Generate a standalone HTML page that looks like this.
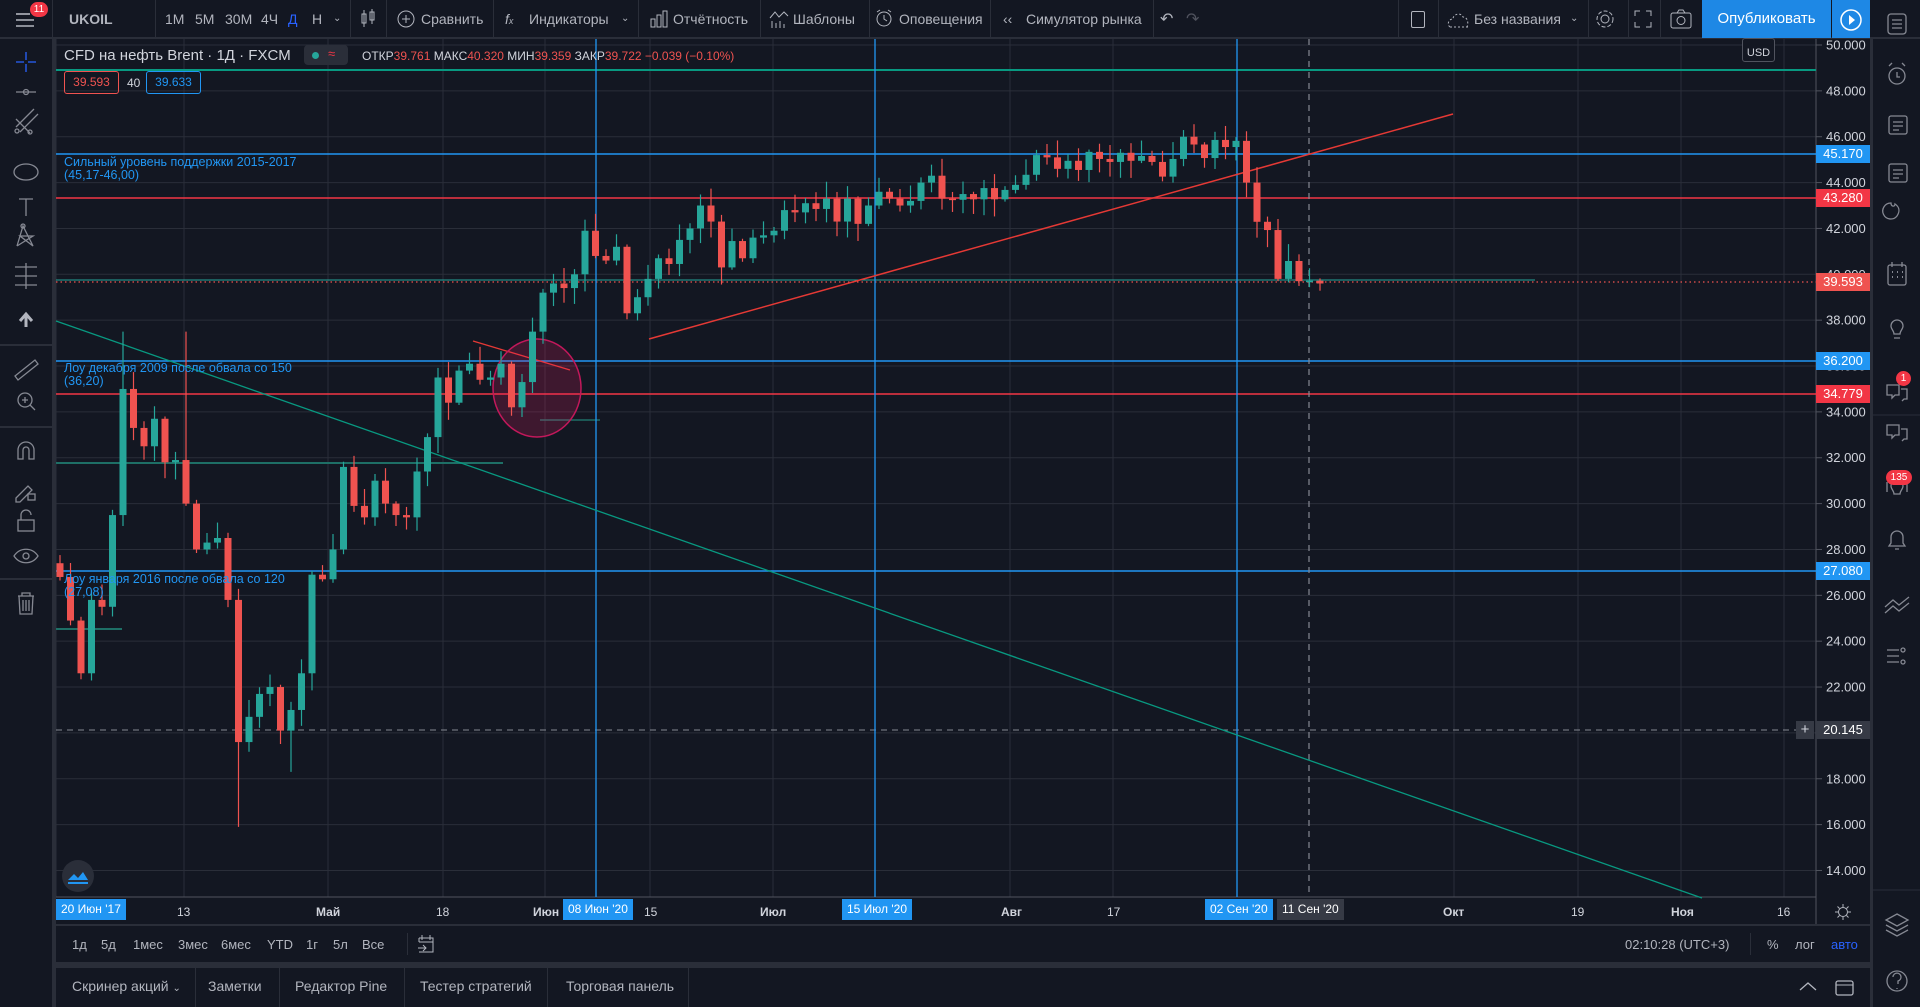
<!DOCTYPE html>
<html><head><meta charset="utf-8">
<style>
*{margin:0;padding:0;box-sizing:border-box}
body{width:1920px;height:1007px;overflow:hidden;background:#2a2e39;font-family:"Liberation Sans",sans-serif;color:#b2b5be;position:relative}
.a{position:absolute}
.tb{left:0;top:0;width:1920px;height:38px;background:#131722;border-bottom:1px solid #2a2e39}
.tt{position:absolute;top:11px;font-size:14px;color:#b2b5be;white-space:nowrap}
.sep{position:absolute;top:0;width:1px;height:38px;background:#2a2e39}
.lt{left:0;top:39px;width:52px;height:968px;background:#131722}
.rs{left:1873px;top:39px;width:47px;height:968px;background:#131722}
.ax{font-size:13px;color:#d1d4dc}
.lbl{position:absolute;left:1816px;width:54px;height:18px;font-size:13px;color:#fff;text-align:center;line-height:18px}
.tl{position:absolute;top:905px;font-size:12px;color:#d1d4dc;white-space:nowrap}
.tbx{position:absolute;top:899px;height:21px;background:#2196f3;color:#fff;font-size:12px;line-height:21px;padding:0 5px;white-space:nowrap}
.rb{position:absolute;top:937px;font-size:13px;color:#b2b5be}
.bt{position:absolute;top:978px;font-size:14px;color:#b2b5be;white-space:nowrap}
</style></head><body>
<div class="a tb"></div>
<!-- top toolbar -->
<svg class="a" style="left:14px;top:9px" width="24" height="22"><g stroke="#b2b5be" stroke-width="1.6"><line x1="2" y1="5" x2="16" y2="5"/><line x1="2" y1="11" x2="20" y2="11"/><line x1="2" y1="17" x2="20" y2="17"/></g></svg>
<div class="a" style="left:30px;top:2px;width:18px;height:15px;border-radius:8px;background:#f23645;color:#fff;font-size:10px;text-align:center;line-height:15px">11</div>
<div class="sep" style="left:52px"></div>
<div class="tt" style="left:69px;font-weight:bold;color:#b2b5be">UKOIL</div>
<div class="sep" style="left:155px"></div>
<div class="tt" style="left:165px">1M</div><div class="tt" style="left:195px">5M</div><div class="tt" style="left:225px">30M</div><div class="tt" style="left:261px">4Ч</div><div class="tt" style="left:288px;color:#2962ff">Д</div><div class="tt" style="left:312px">Н</div><div class="tt" style="left:333px;font-size:10px;top:13px">&#8964;</div>
<div class="sep" style="left:350px"></div>
<svg class="a" style="left:360px;top:8px" width="16" height="22"><g stroke="#b2b5be" fill="none"><rect x="2" y="6" width="4" height="9"/><line x1="4" y1="2" x2="4" y2="19"/><rect x="10" y="4" width="4" height="8"/><line x1="12" y1="1" x2="12" y2="16"/></g></svg>
<div class="sep" style="left:386px"></div>
<svg class="a" style="left:396px;top:9px" width="20" height="20"><circle cx="10" cy="10" r="8" stroke="#b2b5be" fill="none"/><path d="M10 6v8M6 10h8" stroke="#b2b5be"/></svg>
<div class="tt" style="left:421px">Сравнить</div>
<div class="sep" style="left:493px"></div>
<div class="tt" style="left:505px;font-style:italic">f<span style="font-size:9px">x</span></div>
<div class="tt" style="left:529px">Индикаторы</div><div class="tt" style="left:621px;font-size:10px;top:13px">&#8964;</div>
<div class="sep" style="left:638px"></div>
<svg class="a" style="left:650px;top:9px" width="18" height="20"><g stroke="#b2b5be" fill="none"><rect x="1" y="10" width="4" height="8"/><rect x="7" y="6" width="4" height="12"/><rect x="13" y="2" width="4" height="16"/></g></svg>
<div class="tt" style="left:673px">Отчётность</div>
<div class="sep" style="left:760px"></div>
<svg class="a" style="left:769px;top:9px" width="20" height="20"><path d="M1 9l5-6 4 5 5-5 4 4" stroke="#b2b5be" fill="none"/><g stroke="#b2b5be"><line x1="3" y1="12" x2="3" y2="19"/><line x1="7" y1="14" x2="7" y2="19"/><line x1="11" y1="12" x2="11" y2="19"/><line x1="15" y1="15" x2="15" y2="19"/></g></svg>
<div class="tt" style="left:793px">Шаблоны</div>
<div class="sep" style="left:869px"></div>
<svg class="a" style="left:874px;top:8px" width="20" height="22"><circle cx="10" cy="11" r="7" stroke="#b2b5be" fill="none"/><path d="M10 7v4l3 2M3 4l3-2M17 4l-3-2" stroke="#b2b5be" fill="none"/></svg>
<div class="tt" style="left:899px">Оповещения</div>
<div class="sep" style="left:990px"></div>
<div class="tt" style="left:1003px">&#8249;&#8249;</div>
<div class="tt" style="left:1026px">Симулятор рынка</div>
<div class="sep" style="left:1153px"></div>
<div class="tt" style="left:1160px;font-size:16px;top:9px">&#8630;</div><div class="tt" style="left:1186px;font-size:16px;top:9px;color:#50535e">&#8631;</div>
<div class="sep" style="left:1398px"></div>
<div class="a" style="left:1411px;top:11px;width:14px;height:17px;border:1.5px solid #b2b5be;border-radius:2px"></div>
<div class="sep" style="left:1438px"></div>
<svg class="a" style="left:1447px;top:9px" width="24" height="20"><path d="M3 18h18M3 18c-3-2-2-8 3-8 0-5 8-7 10-2 4 0 6 5 4 10" stroke="#b2b5be" fill="none" stroke-dasharray="2 2"/></svg>
<div class="tt" style="left:1474px">Без названия</div><div class="tt" style="left:1570px;font-size:10px;top:13px">&#8964;</div>
<div class="sep" style="left:1588px"></div>
<svg class="a" style="left:1594px;top:8px" width="22" height="22"><circle cx="11" cy="11" r="4" stroke="#b2b5be" fill="none"/><circle cx="11" cy="11" r="8" stroke="#b2b5be" fill="none" stroke-dasharray="4 2"/></svg>
<div class="sep" style="left:1628px"></div>
<svg class="a" style="left:1634px;top:10px" width="18" height="18"><path d="M1 6V1h5M12 1h5v5M17 12v5h-5M6 17H1v-5" stroke="#b2b5be" fill="none"/></svg>
<div class="sep" style="left:1660px"></div>
<svg class="a" style="left:1670px;top:9px" width="22" height="20"><rect x="1" y="4" width="20" height="15" rx="2" stroke="#b2b5be" fill="none"/><circle cx="11" cy="11.5" r="4" stroke="#b2b5be" fill="none"/><path d="M7 4l2-3h4l2 3" stroke="#b2b5be" fill="none"/></svg>
<div class="a" style="left:1702px;top:0;width:129px;height:38px;background:#1e88e5;color:#fff;font-size:15px;line-height:38px;text-align:center">Опубликовать</div>
<div class="a" style="left:1832px;top:0;width:38px;height:38px;background:#1e88e5"></div>
<svg class="a" style="left:1838px;top:7px" width="26" height="26"><circle cx="13" cy="13" r="10" stroke="#fff" stroke-width="1.5" fill="none"/><path d="M11 8l6 5-6 5z" fill="#fff"/></svg>

<!-- left toolbar -->
<div class="a lt"></div>
<svg class="a" style="left:0;top:39px" width="52" height="600"><g stroke="#868993" fill="none" stroke-width="1.3">
<path d="M26 13v8M26 25v8M16 23h8M28 23h8" stroke="#2962ff"/>
<path d="M16 53h20"/><circle cx="26" cy="53" r="2.5"/>
<path d="M16 88l18-18M20 93l18-18M16 80l14 14"/><circle cx="17" cy="92" r="2"/><circle cx="30" cy="93" r="2"/>
<ellipse cx="26" cy="133" rx="12" ry="8"/>
<path d="M19 160h14M26 160v17"/>
<path d="M17 207l6-20 10 20-13-10h13l-16 10" /><circle cx="23" cy="187" r="2"/>
<path d="M15 228h22M15 237h22M15 246h22M26 224v26"/>
<path d="M26 288v-12M20 282l6-7 6 7" stroke="#b2b5be" stroke-width="3"/>
</g><line x1="0" y1="306" x2="52" y2="306" stroke="#2a2e39" stroke-width="2"/>
<g stroke="#868993" fill="none" stroke-width="1.3"><path d="M15 337l20-16 3 4-20 16z"/><circle cx="25" cy="361" r="7"/><path d="M22 361h6M25 358v6M30 366l5 5"/></g>
<line x1="0" y1="388" x2="52" y2="388" stroke="#2a2e39" stroke-width="2"/>
<g stroke="#868993" fill="none" stroke-width="1.3"><path d="M18 420v-9a8 8 0 0 1 16 0v9h-5v-9a3 3 0 0 0-6 0v9z"/>
<path d="M16 459l12-12 4 4-12 12h-4z"/><rect x="28" y="455" width="7" height="6"/>
<rect x="18" y="481" width="16" height="11"/><path d="M21 481v-5a5 5 0 0 1 10 0"/>
<path d="M14 517c6-9 18-9 24 0-6 9-18 9-24 0z"/><circle cx="26" cy="517" r="3"/></g>
<line x1="0" y1="540" x2="52" y2="540" stroke="#2a2e39" stroke-width="2"/>
<g stroke="#868993" fill="none" stroke-width="1.3"><path d="M18 557h16M22 557v-3h8v3M19 557l1 18h12l1-18M23 561v11M26 561v11M29 561v11"/></g>
</svg>

<!-- right sidebar -->
<div class="a rs"></div>
<svg class="a" style="left:1873px;top:0" width="47" height="1007"><g stroke="#868993" fill="none" stroke-width="1.3">
<rect x="15" y="14" width="18" height="20" rx="3"/><path d="M19 20h10M19 24h10M19 28h10"/>
<circle cx="24" cy="76" r="8"/><path d="M24 72v5h3M16 66l3-3M32 66l-3-3"/>
<rect x="16" y="116" width="18" height="18" rx="2"/><path d="M20 122h10M20 126h10M20 130h6"/>
<rect x="16" y="164" width="18" height="18" rx="2"/><path d="M20 170h10M20 174h10M20 178h6"/>
<path d="M24 216a8 8 0 1 1-6-13c0 4 4 4 4 1 3 2 6 6 2 12"/>
<rect x="15" y="265" width="18" height="20" rx="2"/><path d="M19 262v5M29 262v5"/><g stroke-width="2"><path d="M19 272h1M24 272h1M29 272h1M19 277h1M24 277h1M29 277h1"/></g>
<path d="M18 326a6 6 0 1 1 12 0c0 3-3 5-3 8h-6c0-3-3-5-3-8zM21 338h6"/>
<path d="M14 385h12v10h-4l-3 3v-3h-5zM28 389h6v10h-3l-2 2"/>
<path d="M14 425h12v10h-4l-3 3v-3h-5zM28 429h6v10h-3l-2 2"/>
<path d="M18 486a6 6 0 1 1 12 0c0 3-3 5-3 8h-6c0-3-3-5-3-8zM14 482v10M34 482v10"/>
<path d="M16 546h16l-2-3v-6a6 6 0 0 0-12 0v6zM22 549h4"/>
<path d="M12 607l8-7 6 5 10-8M12 613l8-7 6 5 10-8"/>
<path d="M14 650h12M14 656h12M14 662h12"/><circle cx="30" cy="650" r="2"/><circle cx="30" cy="662" r="2"/>
<path d="M24 914l11 6-11 6-11-6zM13 925l11 6 11-6M13 930l11 6 11-6"/>
<circle cx="24" cy="981" r="10"/><path d="M20 977a4 4 0 1 1 5 4v3M24 988v1"/>
</g>
<line x1="0" y1="415" x2="47" y2="415" stroke="#2a2e39"/><line x1="0" y1="890" x2="47" y2="890" stroke="#2a2e39"/>
</svg>
<div class="a" style="left:1896px;top:371px;width:15px;height:15px;border-radius:8px;background:#f23645;color:#fff;font-size:10px;line-height:15px;text-align:center">1</div>
<div class="a" style="left:1886px;top:470px;width:26px;height:15px;border-radius:8px;background:#f23645;color:#fff;font-size:10px;line-height:15px;text-align:center">135</div>

<!-- chart -->
<div class="a" style="left:56px;top:39px;width:1814px;height:885px;background:#131722"></div>
<svg id="ch" class="a" style="left:0;top:0" width="1920" height="1007"></svg>

<div class="a" style="left:64px;top:47px;font-size:15px;color:#d1d4dc;white-space:nowrap">CFD на нефть Brent · 1Д · FXCM</div>
<div class="a" style="left:304px;top:45px;width:44px;height:20px;border-radius:4px;background:#2a2e39"></div>
<div class="a" style="left:312px;top:52px;width:7px;height:7px;border-radius:4px;background:#26a69a"></div>
<div class="a" style="left:328px;top:46px;font-size:13px;color:#f23645">≈</div>
<div class="a" style="left:362px;top:49px;font-size:12px;color:#d1d4dc;white-space:nowrap">ОТКР<span style="color:#ef5350">39.761</span> МАКС<span style="color:#ef5350">40.320</span> МИН<span style="color:#ef5350">39.359</span> ЗАКР<span style="color:#ef5350">39.722 −0.039 (−0.10%)</span></div>
<div class="a" style="left:64px;top:71px;width:55px;height:23px;border:1px solid #ef5350;border-radius:3px;color:#ef5350;font-size:12px;line-height:21px;text-align:center">39.593</div>
<div class="a" style="left:127px;top:76px;font-size:12px;color:#d1d4dc">40</div>
<div class="a" style="left:146px;top:71px;width:55px;height:23px;border:1px solid #2196f3;border-radius:3px;color:#2196f3;font-size:12px;line-height:21px;text-align:center">39.633</div>

<div class="a" style="left:64px;top:156px;font-size:12.5px;color:#2196f3;line-height:13px;white-space:nowrap">Сильный уровень поддержки 2015-2017<br>(45,17-46,00)</div>
<div class="a" style="left:64px;top:362px;font-size:12.5px;color:#2196f3;line-height:13px;white-space:nowrap">Лоу декабря 2009 после обвала со 150<br>(36,20)</div>
<div class="a" style="left:64px;top:573px;font-size:12.5px;color:#2196f3;line-height:13px;white-space:nowrap">Лоу января 2016 после обвала со 120<br>(27,08)</div>

<div class="a" style="left:1742px;top:38px;width:33px;height:24px;border:1px solid #50535e;border-radius:3px;background:#131722;color:#d1d4dc;font-size:11px;text-align:center;line-height:28px">USD</div>

<div class="lbl" style="top:145px;background:#2196f3">45.170</div>
<div class="lbl" style="top:189px;background:#f23645">43.280</div>
<div class="lbl" style="top:273px;background:#ef5350">39.593</div>
<div class="lbl" style="top:352px;background:#2196f3">36.200</div>
<div class="lbl" style="top:385px;background:#f23645">34.779</div>
<div class="lbl" style="top:562px;background:#2196f3">27.080</div>
<div class="lbl" style="top:721px;background:#363a45">20.145</div>
<div class="a" style="left:1796px;top:721px;width:18px;height:18px;background:#363a45;color:#d1d4dc;font-size:15px;line-height:17px;text-align:center">+</div>

<div class="a" style="left:62px;top:860px;width:32px;height:32px;border-radius:16px;background:#2a2e39"></div>
<svg class="a" style="left:66px;top:866px" width="24" height="20"><path d="M2 14l6-6 4 4 5-6 5 8z" fill="#2196f3"/><path d="M2 17h20" stroke="#2196f3" stroke-width="2"/></svg>

<div class="tbx" style="left:56px">20 Июн '17</div>
<div class="tl" style="left:177px">13</div>
<div class="tl" style="left:316px;font-weight:bold">Май</div>
<div class="tl" style="left:436px">18</div>
<div class="tl" style="left:533px;font-weight:bold">Июн</div>
<div class="tbx" style="left:563px">08 Июн '20</div>
<div class="tl" style="left:644px">15</div>
<div class="tl" style="left:760px;font-weight:bold">Июл</div>
<div class="tbx" style="left:842px">15 Июл '20</div>
<div class="tl" style="left:1001px;font-weight:bold">Авг</div>
<div class="tl" style="left:1107px">17</div>
<div class="tbx" style="left:1205px">02 Сен '20</div>
<div class="tbx" style="left:1277px;background:#363a45">11 Сен '20</div>
<div class="tl" style="left:1443px;font-weight:bold">Окт</div>
<div class="tl" style="left:1571px">19</div>
<div class="tl" style="left:1671px;font-weight:bold">Ноя</div>
<div class="tl" style="left:1777px">16</div>
<svg class="a" style="left:1834px;top:903px" width="18" height="18"><circle cx="9" cy="9" r="4.5" stroke="#b2b5be" fill="none"/><path d="M9 1v3M9 14v3M1 9h3M14 9h3M3.5 3.5l2 2M12.5 12.5l2 2M3.5 14.5l2-2M12.5 5.5l2-2" stroke="#b2b5be"/></svg>

<!-- range bar -->
<div class="a" style="left:56px;top:926px;width:1814px;height:36px;background:#131722"></div>
<div class="rb" style="left:72px">1д</div><div class="rb" style="left:101px">5д</div><div class="rb" style="left:133px">1мес</div><div class="rb" style="left:178px">3мес</div><div class="rb" style="left:221px">6мес</div><div class="rb" style="left:267px">YTD</div><div class="rb" style="left:306px">1г</div><div class="rb" style="left:333px">5л</div><div class="rb" style="left:362px">Все</div>
<div class="a" style="left:407px;top:933px;width:1px;height:22px;background:#2a2e39"></div>
<svg class="a" style="left:417px;top:934px" width="18" height="20"><path d="M2 4h14v14H2M2 4v4M5 1v5M13 1v5M2 8h14M1 14h8M6 11l3 3-3 3" stroke="#b2b5be" fill="none"/></svg>
<div class="rb" style="left:1625px">02:10:28 (UTC+3)</div>
<div class="a" style="left:1750px;top:933px;width:1px;height:22px;background:#2a2e39"></div>
<div class="rb" style="left:1767px">%</div><div class="rb" style="left:1795px">лог</div><div class="rb" style="left:1831px;color:#2962ff">авто</div>

<!-- bottom tabs -->
<div class="a" style="left:56px;top:968px;width:1814px;height:39px;background:#131722"></div>
<div class="bt" style="left:72px">Скринер акций <span style="font-size:10px">&#8964;</span></div>
<div class="a" style="left:195px;top:968px;width:1px;height:39px;background:#2a2e39"></div>
<div class="bt" style="left:208px">Заметки</div>
<div class="a" style="left:279px;top:968px;width:1px;height:39px;background:#2a2e39"></div>
<div class="bt" style="left:295px">Редактор Pine</div>
<div class="a" style="left:404px;top:968px;width:1px;height:39px;background:#2a2e39"></div>
<div class="bt" style="left:420px">Тестер стратегий</div>
<div class="a" style="left:547px;top:968px;width:1px;height:39px;background:#2a2e39"></div>
<div class="bt" style="left:566px">Торговая панель</div>
<div class="a" style="left:688px;top:968px;width:1px;height:39px;background:#2a2e39"></div>
<svg class="a" style="left:1798px;top:978px" width="62" height="20"><path d="M2 12l8-7 8 7" stroke="#b2b5be" fill="none" stroke-width="1.3"/><rect x="38" y="3" width="17" height="14" rx="2" stroke="#b2b5be" fill="none" stroke-width="1.3"/><path d="M38 7h17" stroke="#b2b5be"/></svg>

<script>
(function(){
var s=document.getElementById('ch'),h='';
function Y(p){return 45+(50-p)*22.93;}
function L(x1,y1,x2,y2,c,w,d){h+='<line x1="'+x1+'" y1="'+y1+'" x2="'+x2+'" y2="'+y2+'" stroke="'+c+'" stroke-width="'+(w||1)+'"'+(d?' stroke-dasharray="'+d+'"':'')+'/>';}
// grid
for(var p=14;p<=50;p+=2){var y=Y(p);L(56,y,1816,y,'#2a2e39');}
var vx=[56,184,328,443,545,650,773,1010,1113,1454,1578,1681,1784];
vx.forEach(function(x){L(x,39,x,897,'#2a2e39');});
L(1816,39,1816,924,'#50535e');L(56,897,1816,897,'#50535e');
// price labels
for(var p=14;p<=50;p+=2){var y=Y(p);L(1816,y,1822,y,'#50535e');h+='<text x="1826" y="'+(y+4.5)+'" font-size="13" fill="#d1d4dc" font-family="Liberation Sans">'+p.toFixed(3)+'</text>';}
// horizontal drawings
L(56,70,1816,70,'#089981',2);
L(56,154,1816,154,'#2196f3',1.5);
L(56,198,1816,198,'#f23645',1.5);
L(56,282,1816,282,'#ef5350',1.2,'1.5 3');
L(56,280,1535,280,'#26a69a',1);
L(56,361,1816,361,'#2196f3',1.5);
L(56,394,1816,394,'#f23645',1.5);
L(56,571,1816,571,'#2196f3',1.5);
L(56,730,1816,730,'#868993',1,'6 5');
L(56,463,503,463,'#1e6f66',2);L(56,629,122,629,'#1e6f66',2);
L(600,420,540,420,'#1e6f66',1.5);
// verticals
[596,875,1237].forEach(function(x){L(x,39,x,897,'#2196f3',1.3);});
L(1309,39,1309,897,'#868993',1.2,'6 5');
// trend lines
L(56,321,1702,898,'#089981',1.3);
L(649,339,1453,114,'#e53935',1.5);
L(473,341,570,370,'#e53935',1.3);
h+='<ellipse cx="537" cy="388" rx="44" ry="49" fill="rgba(233,30,99,0.2)" stroke="#c2185b" stroke-width="1.5"/>';
// candles
var C=[27.4,26.8,24.9,22.6,25.8,25.5,29.5,35.0,33.3,32.5,33.7,31.8,31.9,30.0,28.0,28.3,28.5,25.8,19.6,20.7,21.7,22.0,20.1,21.0,22.6,26.9,26.7,28.0,31.6,29.9,29.4,31.0,30.0,29.5,29.4,31.4,32.9,35.5,34.4,35.8,36.1,35.4,35.5,36.1,34.2,35.3,37.5,39.2,39.6,
39.4,40.0,41.9,40.8,40.6,41.2,38.3,39.0,39.8,40.7,40.45,41.5,42.0,43.0,42.3,40.3,41.45,40.7,41.6,41.7,41.9,42.8,42.7,43.1,42.85,43.3,42.3,43.3,42.2,43.0,43.6,43.3,43.0,43.2,44.0,44.3,43.3,43.25,43.5,43.27,43.76,43.27,43.68,43.9,44.34,45.2,45.1,44.6,44.95,44.55,45.34,45.03,44.9,45.3,44.95,45.16,44.9,44.26,45.03,46.0,45.66,45.07,45.86,45.55,45.82,44.0,42.29,41.93,39.8,40.58,39.7,39.72,39.6];
var n=C.length-1,x0=60,x1=1320;
for(var i=1;i<=n;i++){
 var o=C[i-1],c=C[i],x=x0+(x1-x0)*(i-1)/(n-1);
 var up=c>=o,col=up?'#26a69a':'#ef5350';
 var r1=((i*37)%11)/11,r2=((i*53)%13)/13;
 var hi=Math.max(o,c)+0.1+r1*0.7,lo=Math.min(o,c)-0.1-r2*0.7;
 if(i==18)lo=15.9; if(i==23)lo=18.3; if(i==7)hi=37.5; if(i==13)hi=37.5;
 L(x,Y(hi),x,Y(lo),col,1.2);
 var yt=Y(Math.max(o,c)),yb=Y(Math.min(o,c));if(yb-yt<1.5)yb=yt+1.5;
 h+='<rect x="'+(x-3.5)+'" y="'+yt+'" width="7" height="'+(yb-yt)+'" fill="'+col+'"/>';
}
s.innerHTML=h;
})();
</script>
</body></html>
